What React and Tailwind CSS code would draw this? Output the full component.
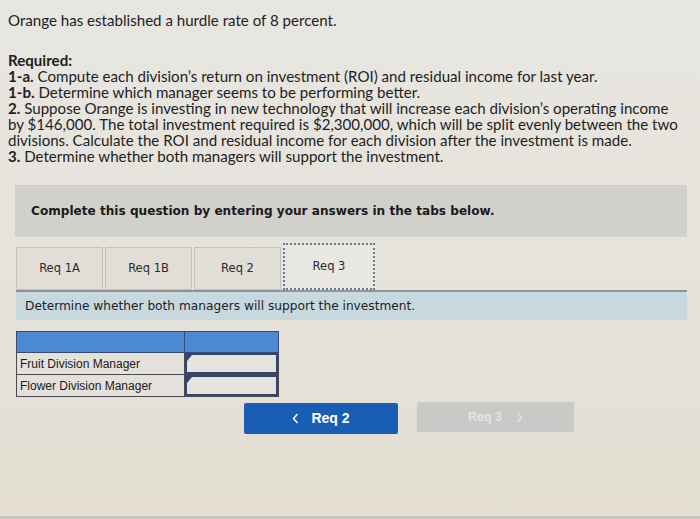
import React from "react";

function Tab({ label, active }) {
  return (
    <div
      className={
        active
          ? "w-[92px] h-[47px] flex items-center justify-center border-2 border-dotted border-[#6b7a9a] bg-[#e9e7e2] text-[11.5px] text-[#2a2a2a]"
          : "w-[87px] h-[43px] flex items-center justify-center border border-[#c4c1ba] bg-[#e1ded7] text-[11.5px] text-[#2a2a2a]"
      }
      style={{ fontFamily: '"DejaVu Sans", Verdana, sans-serif' }}
    >
      {label}
    </div>
  );
}

function Chevron({ dir, className }) {
  return (
    <svg width="7" height="11" viewBox="0 0 7 11" className={className}>
      <path
        d={dir === "left" ? "M5.5 1 L1.5 5.5 L5.5 10" : "M1.5 1 L5.5 5.5 L1.5 10"}
        fill="none"
        stroke="currentColor"
        strokeWidth="1.5"
      />
    </svg>
  );
}

export default function App() {
  return (
    <div className="w-[700px] h-[519px] overflow-hidden bg-gradient-to-b from-[#e8e6e1] via-[#e6e3db] to-[#e3ded1] relative">
      <div
        className="pl-[8px] pt-[12px] w-[682px] text-[15.1px] leading-[16px] text-[#1e1e1e]"
        style={{ fontFamily: 'Lato, "Open Sans", sans-serif' }}
      >
        <p>Orange has established a hurdle rate of 8 percent.</p>
        <div className="mt-[24px]">
          <p className="font-bold">Required:</p>
          <p>
            <span className="font-bold">1-a.</span> Compute each division’s return on investment (ROI) and residual income for last year.
          </p>
          <p>
            <span className="font-bold">1-b.</span> Determine which manager seems to be performing better.
          </p>
          <p>
            <span className="font-bold">2.</span> Suppose Orange is investing in new technology that will increase each division’s operating income by $146,000. The total investment required is $2,300,000, which will be split evenly between the two divisions. Calculate the ROI and residual income for each division after the investment is made.
          </p>
          <p>
            <span className="font-bold">3.</span> Determine whether both managers will support the investment.
          </p>
        </div>
      </div>

      <div className="ml-[15px] mr-[13px] mt-[21px] h-[52px] bg-[#d2d0cb] flex items-center pl-[16px]">
        <span
          className="font-bold text-[12.1px] text-[#1a1a1a]"
          style={{ fontFamily: '"DejaVu Sans", Verdana, sans-serif' }}
        >
          Complete this question by entering your answers in the tabs below.
        </span>
      </div>

      <div className="ml-[16px] mr-[13px] mt-[6px]">
        <div className="flex gap-[2px] items-end">
          <Tab label="Req 1A" />
          <Tab label="Req 1B" />
          <Tab label="Req 2" />
          <Tab label="Req 3" active />
        </div>
        <div
          className="h-[30px] bg-[#c7d8df] border-t-2 border-[#8e9498] flex items-center pl-[9px] text-[12.2px] text-[#1e1e1e]"
          style={{ fontFamily: '"DejaVu Sans", Verdana, sans-serif' }}
        >
          Determine whether both managers will support the investment.
        </div>
      </div>

      <div className="ml-[16px] mt-[11px] w-[263px]" style={{ fontFamily: '"Liberation Sans", Arial, sans-serif' }}>
        <div className="flex h-[22px] bg-[#4b8ad2] border border-[#3a4a6a]">
          <div className="w-[168px] border-r border-[#3a4a6a]" />
          <div className="flex-1" />
        </div>
        {["Fruit Division Manager", "Flower Division Manager"].map((t) => (
          <div key={t} className="flex h-[22px] border border-t-0 border-[#4a4a55] bg-[#e4e1da]">
            <div className="w-[168px] border-r border-[#4a4a55] flex items-center pl-[3px] text-[12px] text-[#1a1a1a]">
              {t}
            </div>
            <div className="flex-1 relative border-2 border-[#2f4670] bg-[#e6e3dc]">
              <div className="absolute left-0 top-0 w-0 h-0 border-t-[6px] border-t-[#2f4670] border-r-[5px] border-r-transparent" />
            </div>
          </div>
        ))}
      </div>

      <div className="flex ml-[244px] mt-[6px] gap-[19px]" style={{ fontFamily: '"Liberation Sans", Arial, sans-serif' }}>
        <div className="w-[154px] h-[31px] bg-[#1a5db5] rounded-[2px] flex items-center justify-center gap-[12px] text-white font-bold text-[14px]">
          <Chevron dir="left" />
          <span>Req 2</span>
        </div>
        <div className="w-[157px] h-[30px] -mt-[1px] bg-[#c9c9c7] rounded-[2px] flex items-center justify-center gap-[14px] text-[#e4e4e2] font-bold text-[12.5px]">
          <span>Req 3</span>
          <Chevron dir="right" />
        </div>
      </div>

      <div className="absolute left-0 right-0 bottom-0 h-[3px] bg-[#c9c5bb]" />
    </div>
  );
}
